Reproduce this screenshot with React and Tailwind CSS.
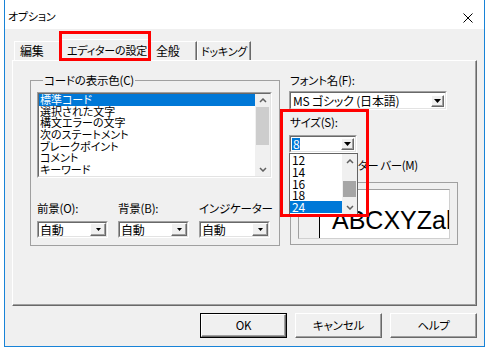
import React from "react";

// classic 3D sunken field (combo / list / checkbox)
const Sunken = ({ className = "", children }) => (
  <div className={`border border-t-[#a0a0a0] border-l-[#a0a0a0] border-r-white border-b-white ${className}`}>
    <div className="h-full border border-t-[#696969] border-l-[#696969] border-r-[#e3e3e3] border-b-[#e3e3e3] bg-white overflow-hidden">
      {children}
    </div>
  </div>
);

const Triangle = ({ big }) =>
  big ? (
    <svg width="7" height="4" viewBox="0 0 7 4">
      <polygon points="0,0 7,0 3.5,4" fill="#000" />
    </svg>
  ) : (
    <svg width="5" height="3" viewBox="0 0 5 3">
      <polygon points="0,0 5,0 2.5,3" fill="#000" />
    </svg>
  );

const Chevron = ({ down }) => (
  <svg width="8" height="5" viewBox="0 0 8 5">
    <path d={down ? "M1 1 L4 4 L7 1" : "M1 4 L4 1 L7 4"} fill="none" stroke="#606060" strokeWidth="1.5" />
  </svg>
);

const DropBtn = ({ big, className = "" }) => (
  <div
    className={`flex items-center justify-center bg-[#f0f0f0] border border-t-white border-l-white border-r-[#696969] border-b-[#696969] shadow-[inset_-1px_-1px_0_#a0a0a0] ${className}`}
  >
    <Triangle big={big} />
  </div>
);

const Combo = ({ label }) => (
  <div className="flex flex-col">
    <span className="leading-[14px]">{label}</span>
    <Sunken className="mt-[6px] w-[71px] h-[17px]">
      <div className="flex h-full items-center justify-between">
        <span className="pl-[1px] leading-[13px] text-[12px]">自動</span>
        <DropBtn className="w-[16px] h-full" />
      </div>
    </Sunken>
  </div>
);

const codeItems = [
  "標準コード",
  "選択された文字",
  "構文エラーの文字",
  "次のステートメント",
  "ブレークポイント",
  "コメント",
  "キーワード",
];

const sizes = ["12", "14", "16", "18", "24"];

const Tab = ({ children, w, pl, selected }) => (
  <div
    className={`flex items-center border-t border-l border-r border-t-white border-l-white border-r-[#696969] shadow-[inset_-1px_0_0_#a0a0a0] ${w} ${pl} ${
      selected ? "h-[22px] -mb-px relative z-10 bg-[#f0f0f0]" : "h-[19px]"
    }`}
  >
    {children}
  </div>
);

const Button = ({ children, isDefault }) => (
  <div className={isDefault ? "border border-black" : ""}>
    <div
      className={`flex items-center justify-center bg-[#f0f0f0] border border-t-white border-l-white border-r-[#696969] border-b-[#696969] shadow-[inset_-1px_-1px_0_#a0a0a0] ${
        isDefault ? "w-[85px] h-[23px]" : "w-[87px] h-[25px]"
      }`}
    >
      {children}
    </div>
  </div>
);

export default function App() {
  return (
    <div className="relative w-[490px] h-[353px] bg-white overflow-hidden whitespace-nowrap text-black text-[11px] tracking-[-0.2px] font-['Noto_Sans_CJK_JP',sans-serif] [font-feature-settings:'palt']">
      <div className="ml-[4px] w-[481px] h-[347px] border-x border-b border-[#1883d7] bg-[#f0f0f0] flex flex-col">
        {/* title bar */}
        <div className="h-[29px] bg-white flex items-start justify-between">
          <span className="ml-[3px] mt-[9px] leading-[14px]">オプション</span>
          <svg className="mt-[13px] mr-[11px]" width="10" height="10" viewBox="0 0 10 10">
            <path d="M0.5 0.5 L9.5 9.5 M9.5 0.5 L0.5 9.5" stroke="#000" strokeWidth="1" />
          </svg>
        </div>

        <div className="px-[7px] flex flex-col">
          {/* tabs */}
          <div className="flex items-end h-[31px] pl-[2px]">
            <Tab w="w-[47px]" pl="pl-[5px]">
              <span className="text-[12px]">編集</span>
            </Tab>
            <Tab w="w-[89px]" pl="pl-[5px]" selected>
              エディターの設定
            </Tab>
            <Tab w="w-[47px]" pl="pl-[5px]">
              <span className="text-[12px]">全般</span>
            </Tab>
            <Tab w="w-[54px]" pl="pl-[3px]">ドッキング</Tab>
          </div>

          {/* tab page */}
          <div className="h-[246px] w-[465px] border border-t-white border-l-white border-r-[#696969] border-b-[#696969] shadow-[inset_-1px_-1px_0_#a0a0a0] flex pl-[17px] pt-[12px]">
            {/* code colours */}
            <fieldset className="min-w-0 w-[250px] h-[173px] border border-[#a0a0a0] px-[6px] pb-[7px]">
              <legend className="ml-[6px] px-[1px] leading-[14px] text-[11.5px]">コードの表示色(C)</legend>
              <Sunken className="mt-[5px] w-[235px] h-[86px]">
                <div className="flex h-full">
                  <div className="flex-1 flex flex-col text-[11px] tracking-normal">
                    {codeItems.map((t, i) => (
                      <div
                        key={t}
                        className={`h-[11.7px] leading-[11.7px] pl-[1px] ${
                          i === 0 ? "bg-[#0078d7] text-white" : ""
                        }`}
                      >
                        {t}
                      </div>
                    ))}
                  </div>
                  <div className="w-[15px] bg-[#f0f0f0] flex flex-col">
                    <div className="h-[13px] flex items-center justify-center">
                      <Chevron />
                    </div>
                    <div className="h-[38px] mx-[1px] bg-[#cdcdcd]" />
                    <div className="flex-1" />
                    <div className="h-[13px] flex items-center justify-center">
                      <Chevron down />
                    </div>
                  </div>
                </div>
              </Sunken>
              <div className="mt-[23px] flex gap-[10px] text-[11.5px]">
                <Combo label="前景(O):" />
                <Combo label="背景(B):" />
                <Combo label="インジケーター" />
              </div>
            </fieldset>

            {/* font side */}
            <div className="ml-[9px] w-[170px] flex flex-col text-[11.5px]">
              <span className="pl-[1px] leading-[14px]">フォント名(F):</span>
              <Sunken className="mt-[4px] w-[158px] h-[19px]">
                <div className="flex h-full items-center justify-between">
                  <span className="pl-[2px] leading-[15px] text-[12px]">MS ゴシック (日本語)</span>
                  <DropBtn big className="w-[13px] h-[12px] mr-[1px]" />
                </div>
              </Sunken>

              <span className="mt-[5px] pl-[1px] leading-[14px]">サイズ(S):</span>
              <div className="relative mt-[6px] w-[68px] h-[18px]">
                <Sunken className="w-full h-full">
                  <div className="flex h-full items-center justify-between">
                    <span className="ml-[1px] px-[1px] leading-[12px] text-[12px] bg-[#0078d7] text-white">8</span>
                    <DropBtn big className="w-[13px] h-[12px] mr-[1px]" />
                  </div>
                </Sunken>
                {/* open drop list */}
                <div className="absolute top-[18px] left-0 w-[69px] h-[62px] z-10 border border-[#646464] bg-white flex text-[12px]">
                  <div className="flex-1 flex flex-col">
                    {sizes.map((s) => (
                      <div
                        key={s}
                        className={`h-[11.8px] leading-[11.8px] pl-[2px] ${
                          s === "24" ? "bg-[#0078d7] text-white" : ""
                        }`}
                      >
                        {s}
                      </div>
                    ))}
                  </div>
                  <div className="w-[15px] bg-[#f0f0f0] flex flex-col">
                    <div className="h-[14px] flex items-center justify-center">
                      <Chevron />
                    </div>
                    <div className="h-[13px]" />
                    <div className="h-[16px] mx-[1px] bg-[#a6a6a6]" />
                    <div className="flex-1" />
                    <div className="h-[14px] flex items-center justify-center">
                      <Chevron down />
                    </div>
                  </div>
                </div>
              </div>

              <div className="mt-[5px] h-[14px] flex items-center pl-[1px]">
                <Sunken className="w-[13px] h-[13px]" />
                <span className="ml-[3px] leading-[14px] tracking-[-0.4px]">インジケーター バー(M)</span>
              </div>

              <fieldset className="min-w-0 mt-[3px] ml-[1px] w-[168px] border border-[#a0a0a0] px-[7px] pb-[5px]">
                <legend className="ml-[6px] px-[1px] leading-[14px]">サンプル</legend>
                <div className="h-[50px] flex border border-[#d0d0d0] border-t-[#a0a0a0] border-l-[#a0a0a0]">
                  <div className="w-[20px] bg-[#f0f0f0]" />
                  <div className="w-px bg-black" />
                  <div className="flex-1 min-w-0 bg-white overflow-hidden flex items-end pb-[4px] pl-[12px]">
                    <span className="text-[25px] leading-[28px] tracking-normal font-['Liberation_Sans',sans-serif]">
                      ABCXYZab
                    </span>
                  </div>
                </div>
              </fieldset>
            </div>
          </div>

          {/* buttons */}
          <div className="mt-[7px] flex justify-end gap-[8px] text-[11.5px]">
            <Button isDefault>OK</Button>
            <Button>キャンセル</Button>
            <Button>ヘルプ</Button>
          </div>
        </div>
      </div>

      {/* red annotation boxes */}
      <div className="absolute left-[59px] top-[31px] w-[92px] h-[30px] border-[3px] border-[#ff0000] z-20" />
      <div className="absolute left-[280px] top-[109px] w-[89px] h-[108px] border-[3px] border-[#ff0000] z-20" />
    </div>
  );
}
